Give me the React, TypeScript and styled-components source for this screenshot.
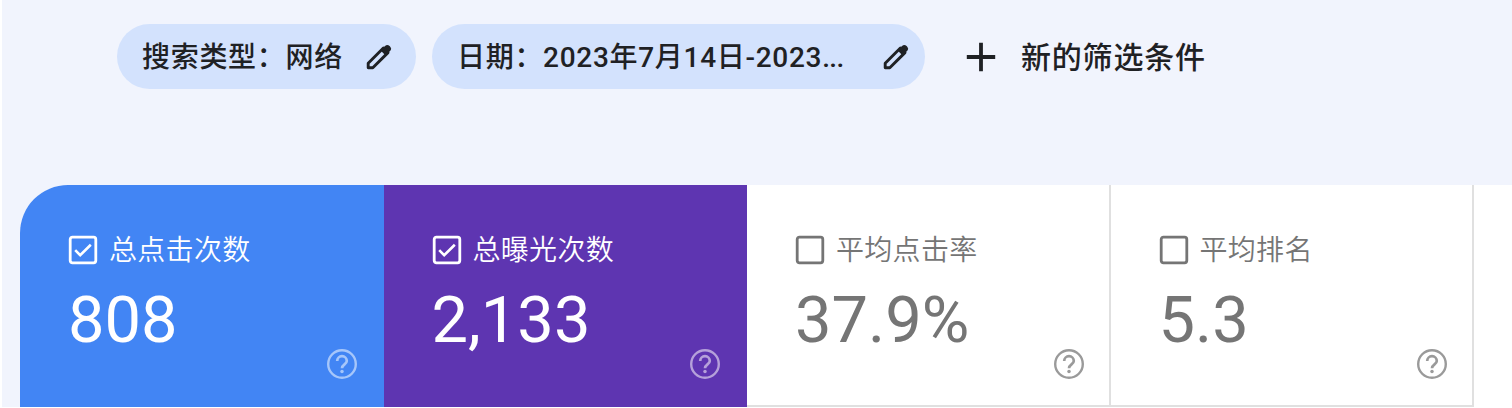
import React from "react";
import styled, { createGlobalStyle } from "styled-components";

const Global = createGlobalStyle`
  * { box-sizing: border-box; }
  body { margin: 0; background: #fff; }
`;

const Page = styled.div`
  width: 1512px;
  height: 408px;
  padding-left: 2px;
  overflow: hidden;
  background: #fff;
  font-family: Roboto, "Noto Sans CJK SC", sans-serif;
`;

const Surface = styled.main`
  height: 407px;
  background: #f1f4fd;
`;

const FilterBar = styled.div`
  display: flex;
  align-items: center;
  height: 185px;
  padding: 24px 0 96px 115px;
`;

const Chip = styled.button<{ $width: number; $end: number }>`
  display: flex;
  align-items: center;
  justify-content: space-between;
  flex: none;
  width: ${(p) => p.$width}px;
  height: 65px;
  margin-right: 16px;
  padding: 0 ${(p) => p.$end}px 0 25px;
  border: 0;
  border-radius: 33px;
  background: #d3e2fd;
  color: #1f2124;
  font: 500 28px/40px Roboto, "Noto Sans CJK SC", sans-serif;
  letter-spacing: 0.7px;
  white-space: nowrap;
`;

const ButtonText = styled.span`
  padding-top: 3px;
`;

const Ellipsis = styled.span`
  letter-spacing: -0.6px;
`;

const AddFilter = styled.button`
  display: flex;
  align-items: center;
  gap: 25px;
  margin-left: 25px;
  padding: 0;
  border: 0;
  background: none;
  color: #1f2124;
  font: 500 30px/40px Roboto, "Noto Sans CJK SC", sans-serif;
  letter-spacing: 0.8px;
  white-space: nowrap;
`;

const Icon = styled.svg`
  display: block;
  flex: none;
`;

const Metrics = styled.section`
  display: flex;
  height: 222px;
  margin-left: 18px;
  border-top-left-radius: 48px;
  background: #fff;
  overflow: hidden;
`;

const Card = styled.article<{ $bg: string; $fg: string; $outlined?: boolean }>`
  display: flex;
  flex-direction: column;
  flex: none;
  width: 363.5px;
  height: 222px;
  padding: 45px ${(p) => (p.$outlined ? 22 : 24)}px 0 48px;
  background: ${(p) => p.$bg};
  color: ${(p) => p.$fg};
  border-style: solid;
  border-color: #e0e0e0;
  border-width: ${(p) => (p.$outlined ? "0 2px 2px 0" : "0")};
`;

const CardHead = styled.div`
  display: flex;
  align-items: center;
  height: 40px;
`;

const Label = styled.span`
  margin-left: 11px;
  padding-top: 2px;
  font-size: 28px;
  line-height: 40px;
  font-weight: 350;
  letter-spacing: 0.3px;
  white-space: nowrap;
`;

const Value = styled.div`
  height: 76px;
  margin-top: 12px;
  font-size: 65px;
  line-height: 76px;
`;

const Help = styled.div<{ $color: string }>`
  align-self: flex-end;
  margin-top: -12px;
  color: ${(p) => p.$color};
`;

const Pencil = () => (
  <Icon width="26" height="26" viewBox="0 0 26 26">
    <path d="M2.2 23.8v-4.6L17.4 4l4.6 4.6L6.8 23.8Z" fill="none" stroke="currentColor" strokeWidth="2.9" strokeLinejoin="round" />
    <path d="M14.6 6.4 19 2a3.3 3.3 0 0 1 4.6 0l.4.4a3.3 3.3 0 0 1 0 4.6L19.6 11.4Z" fill="currentColor" />
  </Icon>
);

const Plus = () => (
  <Icon width="30" height="30" viewBox="0 0 30 30">
    <path d="M15 .8v28.4M.8 15h28.4" stroke="currentColor" strokeWidth="3.8" />
  </Icon>
);

const Checkbox = ({ checked }: { checked: boolean }) => (
  <Icon width="30" height="30" viewBox="0 0 30 30" fill="none" stroke="currentColor">
    <rect x="2.2" y="2.2" width="25.6" height="25.6" rx="2.2" strokeWidth="2.8" />
    {checked && <path d="m7.2 15.2 5 5L22.8 9.8" strokeWidth="2.6" />}
  </Icon>
);

const HelpIcon = () => (
  <Icon width="36" height="36" viewBox="0 0 24 24" fill="currentColor">
    <circle cx="12" cy="12" r="9.2" fill="none" stroke="currentColor" strokeWidth="1.6" />
    <path
      d="M8.8 10a3.2 3.2 0 0 1 6.4 0c0 2.2-3.2 2.3-3.2 4.8"
      fill="none"
      stroke="currentColor"
      strokeWidth="1.8"
    />
    <circle cx="12" cy="17" r="1.15" />
  </Icon>
);

const metrics = [
  { label: "总点击次数", value: "808", checked: true, bg: "#4285f4", fg: "#fff", help: "#a6c6fa" },
  { label: "总曝光次数", value: "2,133", checked: true, bg: "#5e35b1", fg: "#fff", help: "#b5a1da" },
  { label: "平均点击率", value: "37.9%", checked: false, bg: "#fff", fg: "#757575", help: "#9a9a9a" },
  { label: "平均排名", value: "5.3", checked: false, bg: "#fff", fg: "#757575", help: "#9a9a9a" },
];

export default function App() {
  return (
    <Page lang="zh-CN">
      <Global />
      <Surface>
        <FilterBar>
          <Chip $width={299} $end={24}>
            <ButtonText>搜索类型：网络</ButtonText>
            <Pencil />
          </Chip>
          <Chip $width={493} $end={16}>
            <ButtonText>
              日期：2023年7月14日-2023<Ellipsis>...</Ellipsis>
            </ButtonText>
            <Pencil />
          </Chip>
          <AddFilter>
            <Plus />
            <ButtonText>新的筛选条件</ButtonText>
          </AddFilter>
        </FilterBar>
        <Metrics>
          {metrics.map((m) => (
            <Card key={m.label} $bg={m.bg} $fg={m.fg} $outlined={!m.checked}>
              <CardHead>
                <Checkbox checked={m.checked} />
                <Label>{m.label}</Label>
              </CardHead>
              <Value>{m.value}</Value>
              <Help $color={m.help}>
                <HelpIcon />
              </Help>
            </Card>
          ))}
        </Metrics>
      </Surface>
    </Page>
  );
}
